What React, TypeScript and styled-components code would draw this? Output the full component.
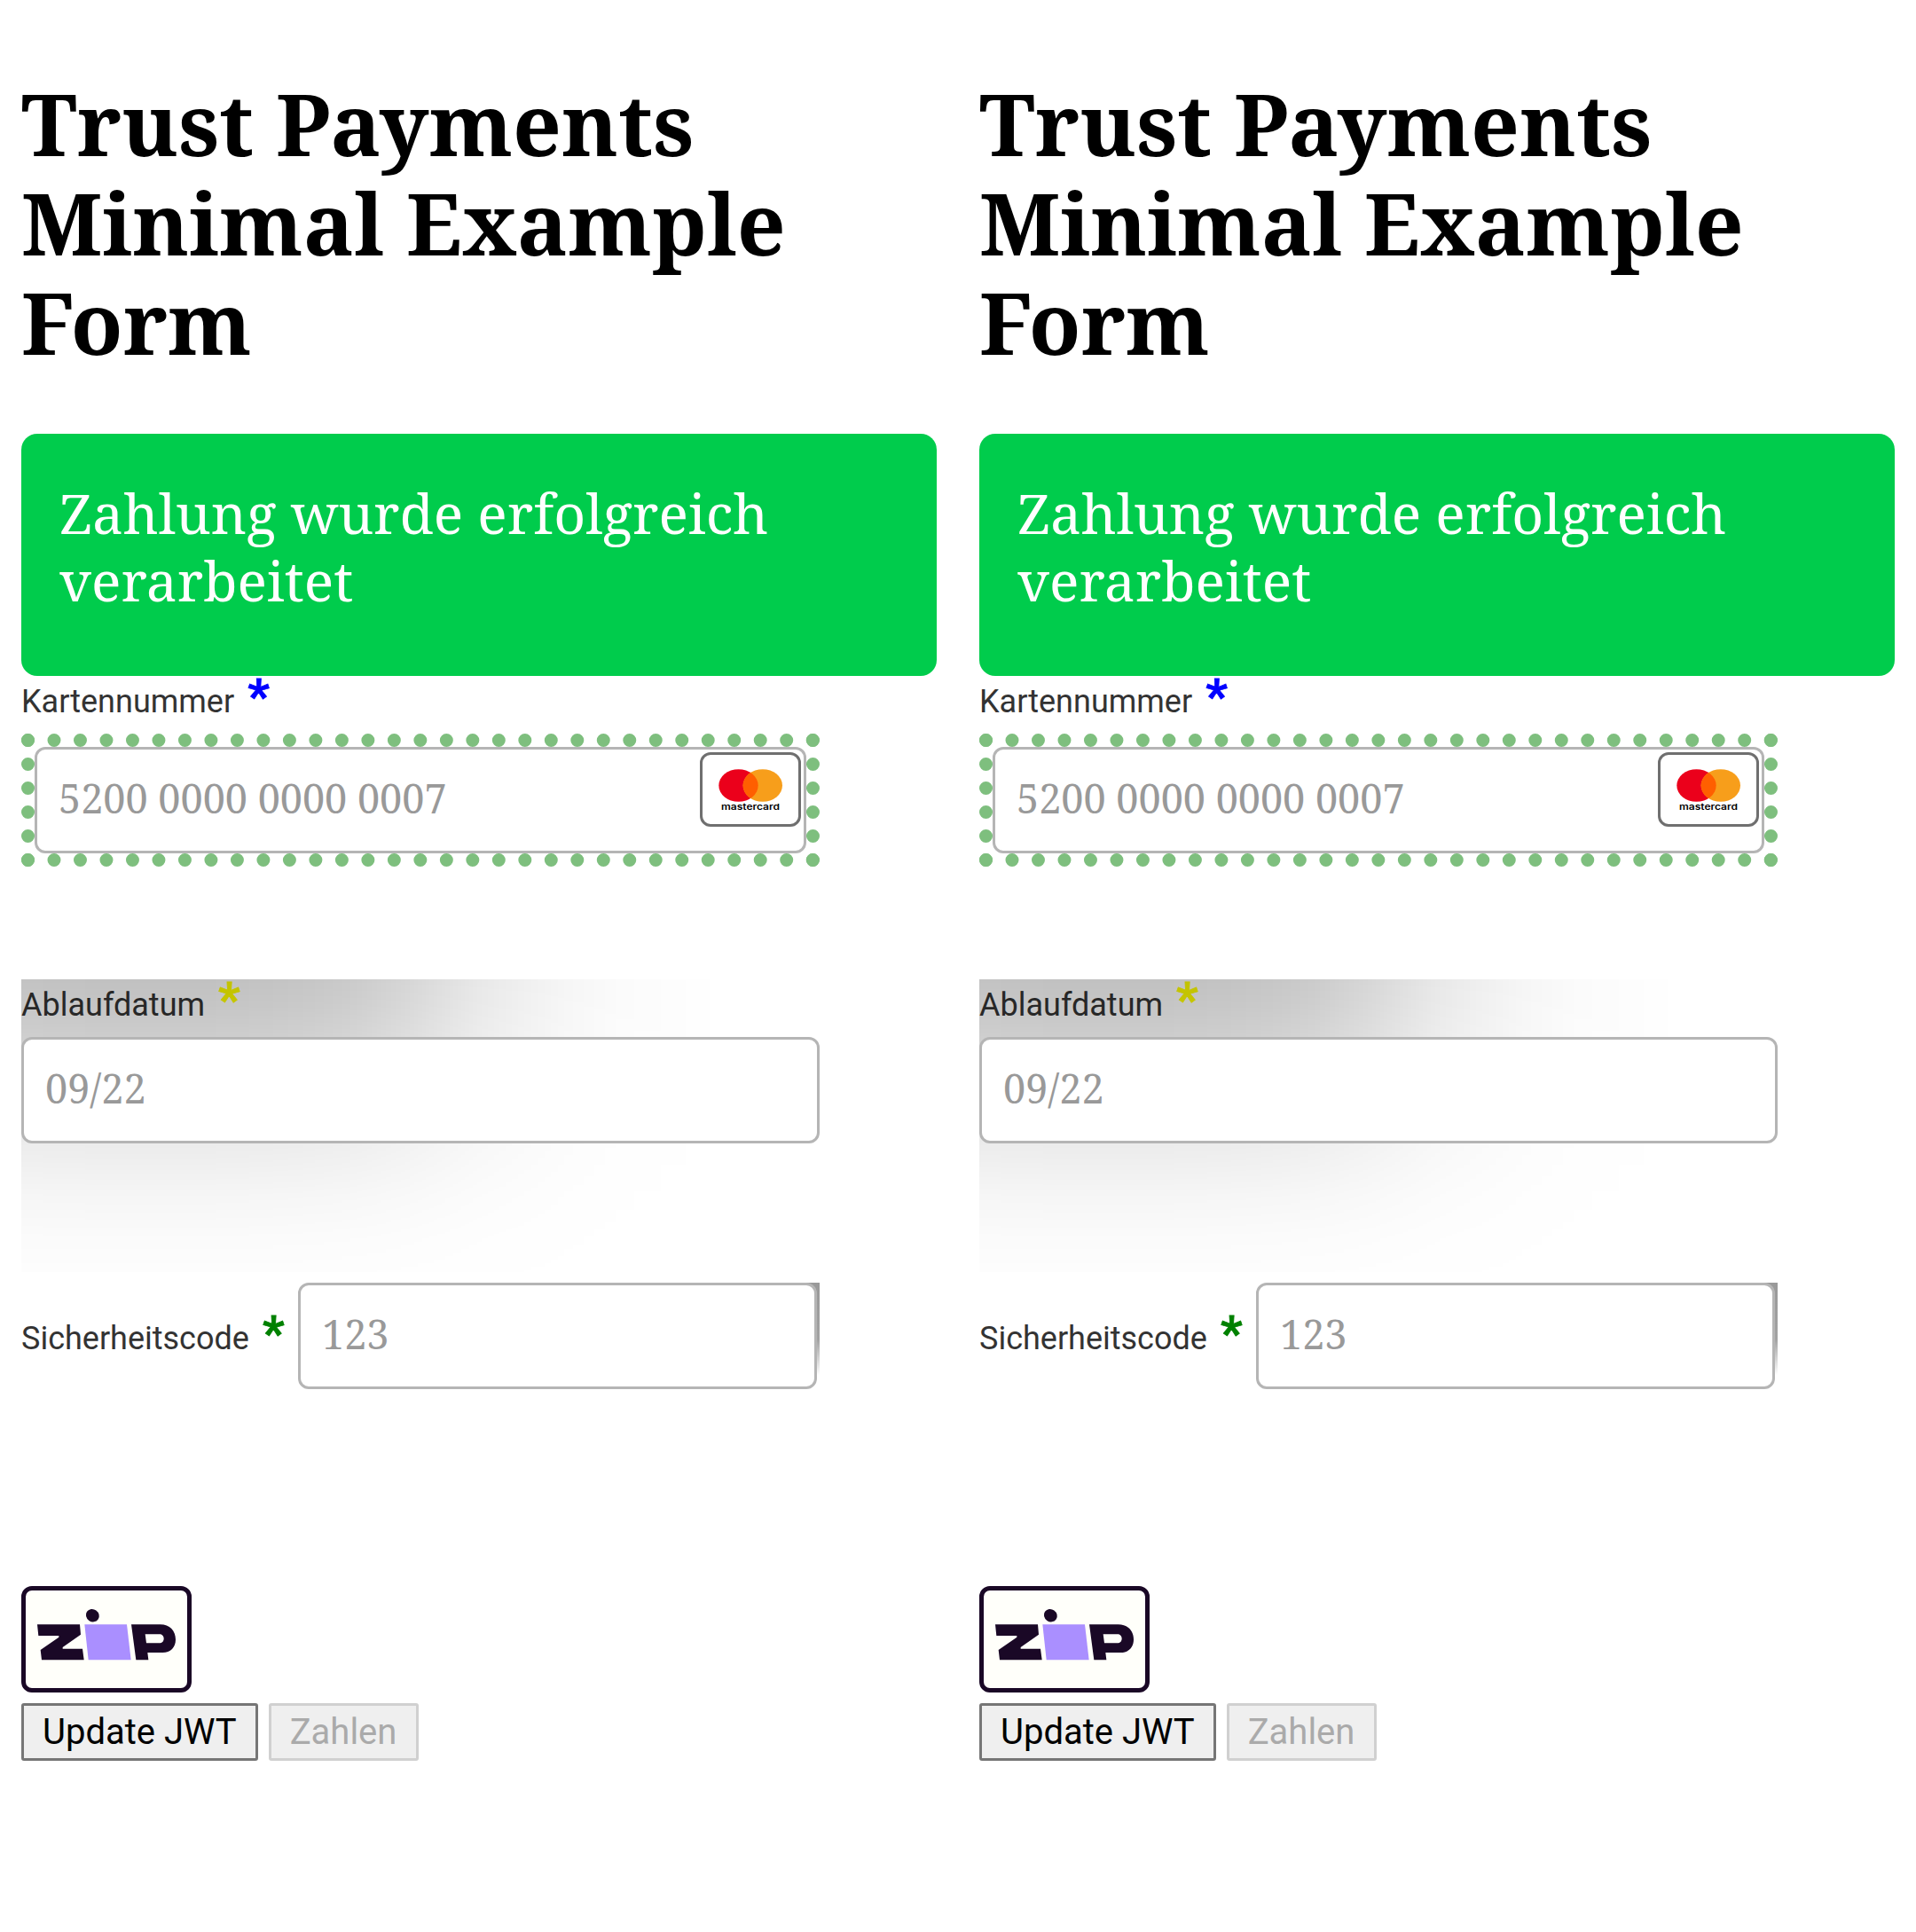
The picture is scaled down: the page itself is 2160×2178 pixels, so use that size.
import React from 'react';
import styled, { createGlobalStyle } from 'styled-components';

const GlobalStyle = createGlobalStyle`
  *, *::before, *::after { box-sizing: border-box; }
  body { margin: 0; background: #fff; }
`;

const Page = styled.div`
  display: grid;
  grid-template-columns: 1fr 1fr;
  width: 2160px;
  min-height: 2178px;
  overflow: hidden;
`;

const Screen = styled.main`
  display: flex;
  flex-direction: column;
  align-items: flex-start;
  padding: 83px 24px 0;
  font-family: 'Noto Serif', 'DejaVu Serif', serif;
`;

const Title = styled.h1`
  margin: 0 0 70px;
  font-size: 96px;
  font-weight: 700;
  line-height: 112px;
  color: #000;
`;

const Notification = styled.div`
  width: 100%;
  height: 273px;
  padding: 51px 42px 0 43px;
  border-radius: 18px;
  background: #00cc4c;
  color: #fff;
  font-size: 62.4px;
  line-height: 76px;
`;

const Field = styled.div`
  width: 900px;
  height: 342px;
`;

const ShadedField = styled(Field)`
  position: relative;

  &::after {
    content: '';
    position: absolute;
    inset: 0 0 12px;
    background: linear-gradient(
      to right,
      rgba(0, 0, 0, 0.235) 0px,
      rgba(0, 0, 0, 0.243) 96px,
      rgba(0, 0, 0, 0.243) 200px,
      rgba(0, 0, 0, 0.237) 276px,
      rgba(0, 0, 0, 0.225) 326px,
      rgba(0, 0, 0, 0.203) 376px,
      rgba(0, 0, 0, 0.16) 436px,
      rgba(0, 0, 0, 0.125) 476px,
      rgba(0, 0, 0, 0.09) 516px,
      rgba(0, 0, 0, 0.065) 556px,
      rgba(0, 0, 0, 0.035) 616px,
      rgba(0, 0, 0, 0.016) 676px,
      rgba(0, 0, 0, 0.006) 736px,
      rgba(0, 0, 0, 0) 790px
    );
    mask-image: linear-gradient(
      to bottom,
      rgba(0, 0, 0, 1) 0px,
      rgba(0, 0, 0, 0.93) 30px,
      rgba(0, 0, 0, 0.81) 64px,
      rgba(0, 0, 0, 0.57) 120px,
      rgba(0, 0, 0, 0.31) 186px,
      rgba(0, 0, 0, 0.15) 246px,
      rgba(0, 0, 0, 0.07) 290px,
      rgba(0, 0, 0, 0.03) 330px
    );
    pointer-events: none;
  }
`;

const InlineField = styled(Field)`
  display: flex;
  align-items: flex-start;
`;

const Label = styled.label<{ $inline?: boolean }>`
  display: flex;
  align-items: baseline;
  width: ${p => (p.$inline ? '312px' : 'auto')};
  height: ${p => (p.$inline ? '120px' : '65px')};
  font-family: Roboto, sans-serif;
  font-size: 36px;
  line-height: ${p => (p.$inline ? '127px' : '59px')};
  color: #333;
  white-space: nowrap;
`;

const Required = styled.span<{ $color: string }>`
  margin-left: 15px;
  font-size: 54px;
  font-weight: 700;
  line-height: 0;
  color: ${p => p.$color};
  -webkit-text-stroke: 0.8px currentColor;
`;

const DottedFrame = styled.div`
  height: 150px;
  border: 15px dotted rgba(0, 128, 0, 0.5);
`;

const Input = styled.div`
  position: relative;
  z-index: 1;
  display: flex;
  justify-content: space-between;
  width: 100%;
  height: 120px;
  padding: 0 3px 0 24px;
  border: 3px solid #b5b5b5;
  border-radius: 12px;
  background: #fff;
  color: #999;
  font-size: 45px;
  line-height: 110px;
`;

const CodeSlot = styled.div`
  flex: 1;
  padding-right: 3px;
  background: linear-gradient(to bottom, #999 0, #a2a2a2 64px, #d0d0d0 84px, #fff 104px) right top / 15px 120px no-repeat;
`;

const CardBadge = styled.div`
  width: 114px;
  height: 84px;
  margin-top: 3px;
  border: 3px solid #6f6f6f;
  border-radius: 12px;
  background: #fff;

  svg { display: block; }
`;

const ZipButton = styled.div`
  width: 192px;
  height: 120px;
  border: 5px solid #1a0826;
  border-radius: 12px;
  background: #fffffa;

  svg { display: block; }
`;

const Actions = styled.div`
  display: flex;
  gap: 12px;
  margin-top: 12px;
`;

const Button = styled.button`
  height: 65px;
  padding: 0 21px;
  border: 3px solid #767676;
  border-radius: 3px;
  background: #efefef;
  color: #000;
  font-family: Roboto, sans-serif;
  font-size: 40px;
  line-height: 59px;

  &:disabled {
    padding-right: 22px;
    border-color: #d0d0d0;
    color: #aaa;
  }
`;

function Mastercard() {
  return (
    <CardBadge>
      <svg width="108" height="78" viewBox="792 851 108 78">
        <defs>
          <clipPath id="left-disc">
            <ellipse cx="832.5" cy="885.5" rx="22.2" ry="18.3" />
          </clipPath>
        </defs>
        <ellipse cx="832.5" cy="885.5" rx="22.2" ry="18.3" fill="#eb001b" />
        <ellipse cx="859.8" cy="885.5" rx="22.2" ry="18.3" fill="#f79e1b" />
        <ellipse cx="859.8" cy="885.5" rx="22.2" ry="18.3" fill="#ff5f00" clipPath="url(#left-disc)" />
        <text
          x="813"
          y="913"
          fontFamily="Inter, sans-serif"
          fontSize="9.4"
          fontWeight="600"
          textLength="66"
          lengthAdjust="spacingAndGlyphs"
          fill="#000"
        >
          mastercard
        </text>
      </svg>
    </CardBadge>
  );
}

function Zip() {
  return (
    <ZipButton>
      <svg width="182" height="110" viewBox="87 69 546 330">
        <g fill="#1a0826">
          <path d="M126 184H270L273 218L212 261V266H279L284 304H141L137 270L199 227V222H130Z" />
          <ellipse cx="313" cy="153.5" rx="23" ry="21" transform="rotate(35 313 153.5)" />
          <path
            fillRule="evenodd"
            d="M444 184H542C574 184 594 205 594 235C594 262 577 279 550 279H499L502 304H460ZM491 217L495 247H539C548 247 554 241 554 232C554 223 548 217 539 217Z"
          />
        </g>
        <path d="M286 184H429L443 304H299Z" fill="#aa8fff" />
      </svg>
    </ZipButton>
  );
}

function PaymentScreen() {
  return (
    <Screen>
      <Title>Trust Payments Minimal Example Form</Title>
      <Notification>Zahlung wurde erfolgreich verarbeitet</Notification>
      <Field>
        <Label>
          Kartennummer<Required $color="#00f">*</Required>
        </Label>
        <DottedFrame>
          <Input>
            5200 0000 0000 0007
            <Mastercard />
          </Input>
        </DottedFrame>
      </Field>
      <ShadedField>
        <Label>
          Ablaufdatum<Required $color="#ff0">*</Required>
        </Label>
        <Input>09/22</Input>
      </ShadedField>
      <InlineField>
        <Label $inline>
          Sicherheitscode<Required $color="green">*</Required>
        </Label>
        <CodeSlot>
          <Input>123</Input>
        </CodeSlot>
      </InlineField>
      <Zip />
      <Actions>
        <Button>Update JWT</Button>
        <Button disabled>Zahlen</Button>
      </Actions>
    </Screen>
  );
}

export default function App() {
  return (
    <>
      <GlobalStyle />
      <Page>
        <PaymentScreen />
        <PaymentScreen />
      </Page>
    </>
  );
}
